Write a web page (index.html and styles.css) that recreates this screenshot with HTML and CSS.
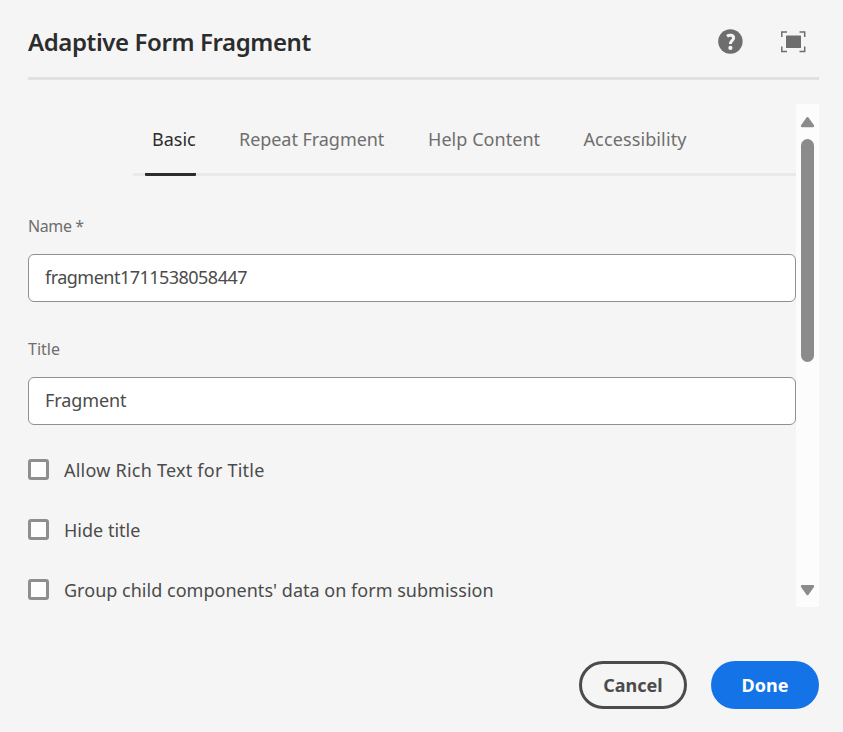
FILE: index.html
```
<!DOCTYPE html>
<html lang="en">
<head>
<meta charset="utf-8">
<title>Adaptive Form Fragment</title>
<link rel="stylesheet" href="styles.css">
</head>
<body>
<main class="dialog">
  <header class="header">
    <h1 class="heading">Adaptive Form Fragment</h1>
    <svg class="help" width="26" height="26" viewBox="0 0 26 26" aria-hidden="true">
      <circle cx="13.4" cy="12.5" r="12.2" fill="#6e6e6e"/>
      <path d="M10 7.3C12.2 5.6 16.6 5.8 16.6 8.9C16.6 11.5 13.4 11.7 13.4 15" fill="none" stroke="#f5f5f5" stroke-width="3"/>
      <circle cx="13.4" cy="18.9" r="2.1" fill="#f5f5f5"/>
    </svg>
    <svg class="fullscreen" width="26" height="22" viewBox="0 0 26 22" aria-hidden="true">
      <path d="M1.8 6V1H7M19.5 1H24.7V6M24.7 15.5V20.5H19.5M7 20.5H1.8V15.5" fill="none" stroke="#6e6e6e" stroke-width="1.5"/>
      <rect x="6" y="4.4" width="15" height="12.6" rx=".6" fill="#6e6e6e"/>
    </svg>
  </header>
  <section class="viewport">
    <div class="content">
      <nav class="tabs">
        <a class="tab tab-basic selected">Basic</a>
        <a class="tab tab-repeat">Repeat Fragment</a>
        <a class="tab tab-help">Help Content</a>
        <a class="tab tab-access">Accessibility</a>
      </nav>
      <div class="field">
        <div class="label name-label">Name *</div>
        <div class="input name-value">fragment1711538058447</div>
      </div>
      <div class="field">
        <div class="label">Title</div>
        <div class="input title-value">Fragment</div>
      </div>
      <div class="checks">
        <div class="check"><span class="box"></span><span class="rich">Allow Rich Text for Title</span></div>
        <div class="check"><span class="box"></span><span class="hide">Hide title</span></div>
        <div class="check"><span class="box"></span><span class="group">Group child components' data on form submission</span></div>
      </div>
    </div>
    <div class="scrollbar">
      <svg width="15" height="12" viewBox="0 0 15 12"><path d="M7.5 2.2L13 10H2Z" fill="#8b8b8b" stroke="#8b8b8b" stroke-width="2.4" stroke-linejoin="round"/></svg>
      <div class="thumb"></div>
      <svg width="15" height="12" viewBox="0 0 15 12"><path d="M7.5 10L13 2.2H2Z" fill="#8b8b8b" stroke="#8b8b8b" stroke-width="2.4" stroke-linejoin="round"/></svg>
    </div>
  </section>
  <footer class="footer">
    <div class="button cancel">Cancel</div>
    <div class="button done">Done</div>
  </footer>
</main>
</body>
</html>
```
FILE: styles.css
```
* { box-sizing: border-box; }
body {
  margin: 0;
  background: #f5f5f5;
  color: #4b4b4b;
  font: 18px/24px "Noto Sans", "Open Sans", sans-serif;
}
.dialog { width: 843px; height: 732px; padding: 0 24px 0 28px; white-space: nowrap; overflow: hidden; }
.header {
  display: flex;
  align-items: center;
  height: 80px;
  padding: 6px 13px 0 0;
  border-bottom: 3px solid #e1e1e1;
}
.heading { margin: 0; flex: 1; font-size: 24px; line-height: 32px; font-weight: 600; color: #2c2c2c; letter-spacing: -.4px; }
.help { margin-right: 37px; }
.viewport { display: flex; height: 503px; margin-top: 24px; }
.content { width: 768px; }
.tabs {
  display: flex;
  height: 72px;
  margin-left: 105px;
  padding-left: 12px;
  border-bottom: 3px solid #e9e9e9;
}
.tab { height: 72px; line-height: 71px; color: #6e6e6e; }
.tab-basic { width: 51px; padding-left: 7px; margin-right: 43px; }
.tab-repeat { width: 189px; letter-spacing: -.05px; }
.tab-help { width: 155.5px; letter-spacing: .05px; }
.tab-access { letter-spacing: .12px; }
.selected { color: #2c2c2c; border-bottom: 3px solid #2c2c2c; border-radius: 1px; }
.field { height: 123px; padding-top: 38px; }
.label { height: 40px; font-size: 16px; line-height: 24px; color: #6e6e6e; }
.name-label { letter-spacing: -.4px; }
.input {
  height: 48px;
  padding: 0 16px;
  background: #fff;
  border: 1px solid #909090;
  border-radius: 6px;
  line-height: 44px;
}
.name-value { letter-spacing: -.52px; }
.title-value { letter-spacing: -.1px; }
.checks { padding-top: 17px; }
.check { display: flex; align-items: center; height: 60px; gap: 15px; }
.box { width: 21px; height: 21px; border: 3px solid #8e8e8e; border-radius: 3px; background: #fdfdfd; }
.rich { letter-spacing: .23px; }
.group { letter-spacing: .02px; }
.check > span:last-child { padding-top: 1px; }
.scrollbar {
  display: flex;
  flex-direction: column;
  align-items: center;
  width: 23px;
  padding: 12px 0 11px;
  background: #fcfcfc;
}
.thumb { width: 13px; height: 223px; margin: 11px 0 auto; border-radius: 7px; background: #8b8b8b; }
.footer { display: flex; justify-content: flex-end; gap: 24px; margin-top: 54px; }
.button { width: 108px; height: 48px; border-radius: 24px; line-height: 48px; text-align: center; font-weight: 700; }
.cancel { border: 3px solid #4b4b4b; line-height: 42px; }
.done { background: #1473e6; color: #fff; }
```
